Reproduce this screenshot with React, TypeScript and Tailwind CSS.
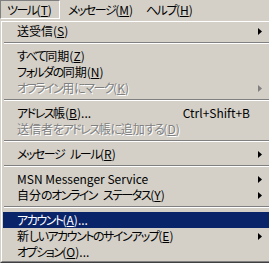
import React from "react";

type Item = {
  pre: string;
  key?: string;
  post?: string;
  shortcut?: string;
  arrow?: boolean;
  disabled?: boolean;
  active?: boolean;
};

type Entry = Item | "sep";

const entries: Entry[] = [
  { pre: "送受信(", key: "S", post: ")", arrow: true },
  "sep",
  { pre: "すべて同期(", key: "Z", post: ")" },
  { pre: "フォルダの同期(", key: "N", post: ")" },
  { pre: "オフライン用にマーク(", key: "K", post: ")", arrow: true, disabled: true },
  "sep",
  { pre: "アドレス帳(", key: "B", post: ")...", shortcut: "Ctrl+Shift+B" },
  { pre: "送信者をアドレス帳に追加する(", key: "D", post: ")", disabled: true },
  "sep",
  { pre: "メッセージ ルール(", key: "R", post: ")", arrow: true },
  "sep",
  { pre: "MSN Messenger Service", arrow: true },
  { pre: "自分のオンライン ステータス(", key: "Y", post: ")", arrow: true },
  "sep",
  { pre: "アカウント(", key: "A", post: ")...", active: true },
  { pre: "新しいアカウントのサインアップ(", key: "E", post: ")", arrow: true },
  { pre: "オプション(", key: "O", post: ")..." }
];

// kana are narrower in the old UI font, so tighten them only
function Jp({ text }: { text: string }) {
  const parts = text.split(/([\u3040-\u30ff]+)/).filter(p => p !== "");
  return (
    <>
      {parts.map((p, i) =>
        /[\u3040-\u30ff]/.test(p) ? (
          <span key={i} className="tracking-[-1.5px]">
            {p}
          </span>
        ) : p === " " ? (
          <span key={i} className="inline-block w-[6px]">
            {" "}
          </span>
        ) : (
          <span key={i}>{p}</span>
        )
      )}
    </>
  );
}

function Arrow({ color }: { color: string }) {
  return (
    <svg width="4" height="7" viewBox="0 0 4 7" className="block">
      <path d="M0 0 L4 3.5 L0 7 Z" fill={color} />
    </svg>
  );
}

function Label({ pre, k, post }: { pre: string; k?: string; post?: string }) {
  return (
    <span className="whitespace-pre">
      <Jp text={pre} />
      {k && <span className="underline decoration-1 underline-offset-[1px]">{k}</span>}
      {post}
    </span>
  );
}

function MenuRow({ item }: { item: Item }) {
  const text = item.active
    ? "text-white bg-[#0a246a]"
    : item.disabled
      ? "text-[#808080] [text-shadow:1px_1px_0_#ffffff]"
      : "text-black";
  return (
    <div className={`flex items-center h-[16px] pl-[14px] pr-[6px] ${text}`}>
      <div className="flex-grow">
        <Label pre={item.pre} k={item.key} post={item.post} />
      </div>
      {item.shortcut && <span className="mr-[17px]">{item.shortcut}</span>}
      {item.arrow && (
        <div className="mr-[5px]">
          <Arrow color={item.disabled ? "#808080" : item.active ? "#ffffff" : "#000000"} />
        </div>
      )}
    </div>
  );
}

export default function App() {
  return (
    <div className="w-[269px] h-[263px] overflow-hidden bg-[#d4d0c8] text-[12px] leading-[16px] font-['Noto_Sans_CJK_JP',sans-serif] [font-feature-settings:'palt']">
      <div className="flex h-[20px]">
        <div className="w-[60px] h-[19px] pl-[6px] flex items-center border-t border-l border-[#808080] border-b-white border-r-white border-b border-r">
          <Label pre="ツール(" k="T" post=")" />
        </div>
        <div className="w-[79px] h-[19px] pl-[8px] flex items-center">
          <Label pre="メッセージ(" k="M" post=")" />
        </div>
        <div className="w-[80px] h-[19px] pl-[7px] flex items-center">
          <Label pre="ヘルプ(" k="H" post=")" />
        </div>
      </div>
      <div className="w-[276px] border-t border-l border-[#d4d0c8] border-b-[#404040] border-r-[#404040] border-b border-r">
        <div className="border-t border-l border-white border-b-[#808080] border-r-[#808080] border-b border-r p-[1px]">
          {entries.map((e, i) =>
            e === "sep" ? (
              <div key={i} className="h-[9px] pt-[3px] px-[1px]">
                <div className="h-[1px] bg-[#808080]" />
                <div className="h-[1px] bg-white" />
              </div>
            ) : (
              <MenuRow key={i} item={e} />
            )
          )}
        </div>
      </div>
    </div>
  );
}
